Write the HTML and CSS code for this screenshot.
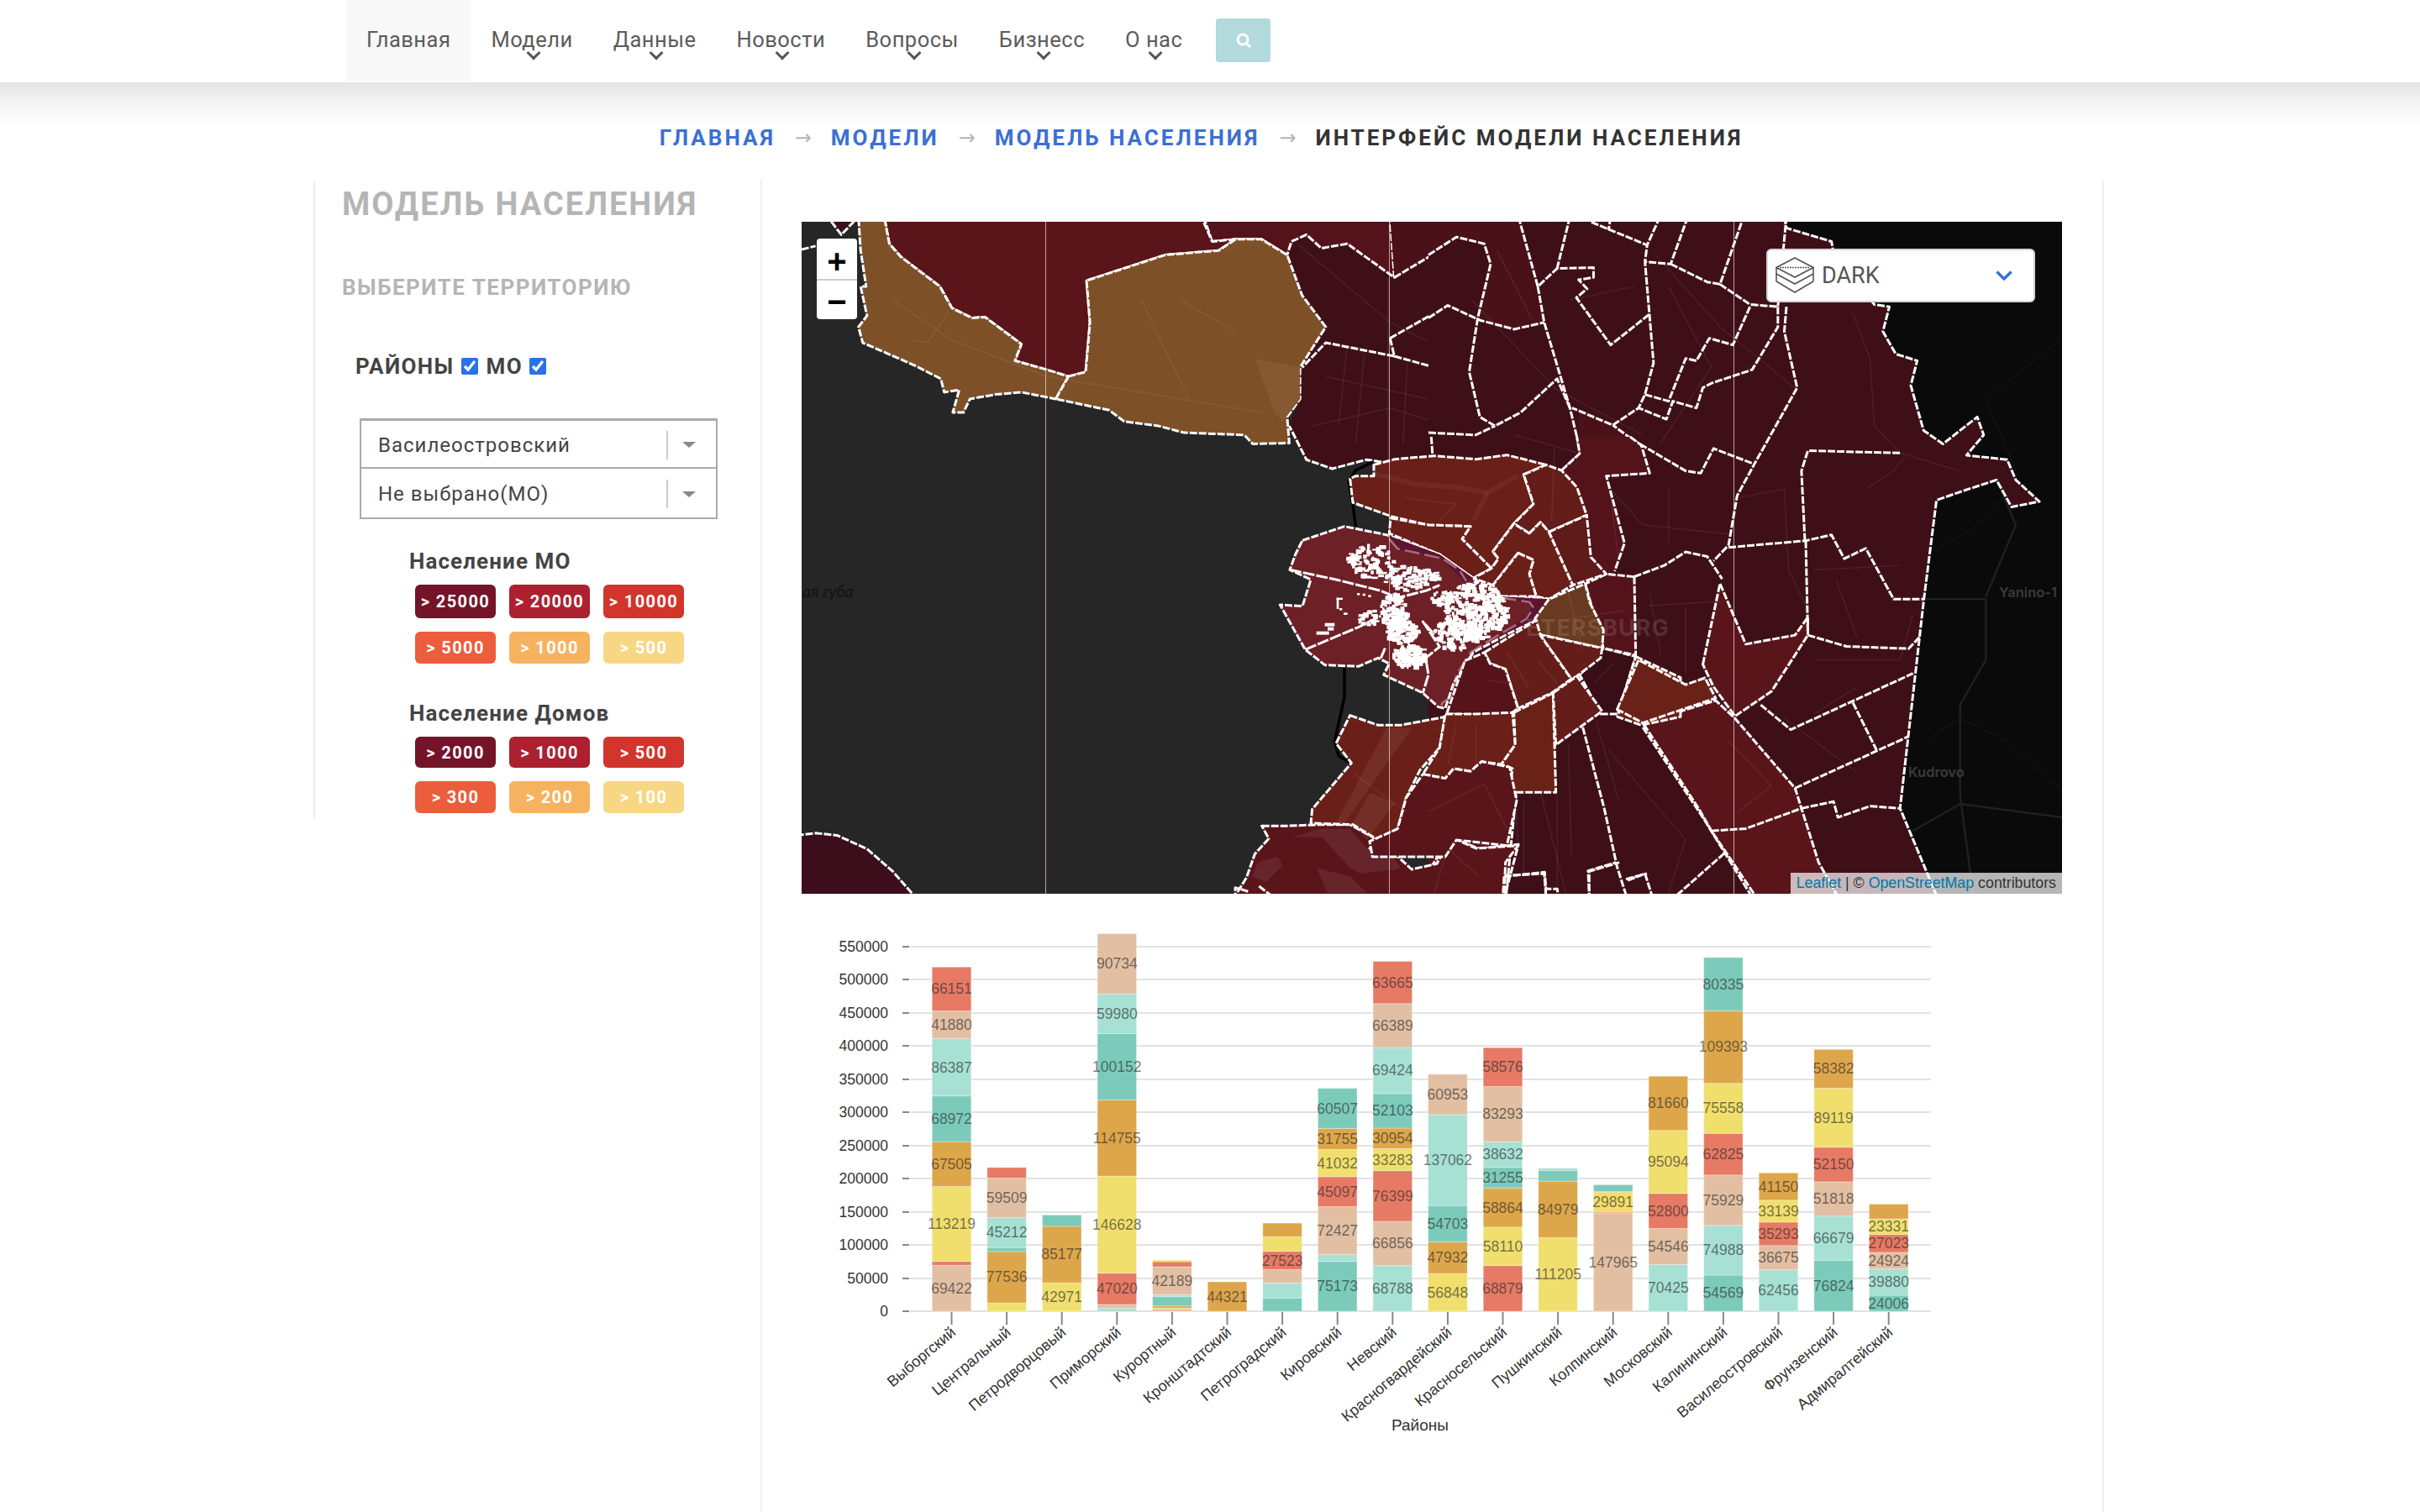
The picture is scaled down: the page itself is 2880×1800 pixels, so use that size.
FILE: index.html
```html
<!DOCTYPE html>
<html lang="ru">
<head>
<meta charset="utf-8">
<title>Модель населения</title>
<link rel="stylesheet" href="styles.css">
</head>
<body>
<header class="topbar">
  <nav class="nav">
    <a class="nav-item active">Главная</a>
    <a class="nav-item drop">Модели</a>
    <a class="nav-item drop">Данные</a>
    <a class="nav-item drop">Новости</a>
    <a class="nav-item drop">Вопросы</a>
    <a class="nav-item drop">Бизнесс</a>
    <a class="nav-item drop">О нас</a>
    <button class="search" aria-label="Поиск">
      <svg width="20" height="20" viewBox="0 0 20 20"><circle cx="9" cy="9" r="6" fill="none" stroke="#fff" stroke-width="3"/><path d="M13 13l5 5" stroke="#fff" stroke-width="3"/></svg>
    </button>
  </nav>
</header>
<div class="topshade"></div>
<ol class="crumbs">
  <li><a>Главная</a></li><li class="arrow">→</li>
  <li><a>Модели</a></li><li class="arrow">→</li>
  <li><a>Модель населения</a></li><li class="arrow">→</li>
  <li class="current">Интерфейс модели населения</li>
</ol>
<main class="main">
  <aside class="side">
    <div class="panel">
      <h1 class="title">Модель населения</h1>
      <h2 class="subtitle">Выберите территорию</h2>
      <div class="checks">
        <label class="check">Районы <input type="checkbox" checked></label>
        <label class="check">МО <input type="checkbox" checked></label>
      </div>
      <div class="selects">
        <div class="select"><span class="select-text">Василеостровский</span><span class="select-sep"></span><span class="select-caret"></span></div>
        <div class="select"><span class="select-text">Не выбрано(МО)</span><span class="select-sep"></span><span class="select-caret"></span></div>
      </div>
      <h3 class="legend-title first">Население МО</h3>
      <div class="badges one">
        <span class="badge c1">&gt; 25000</span><span class="badge c2">&gt; 20000</span><span class="badge c3">&gt; 10000</span>
        <span class="badge c4">&gt; 5000</span><span class="badge c5">&gt; 1000</span><span class="badge c6">&gt; 500</span>
      </div>
      <h3 class="legend-title second">Население Домов</h3>
      <div class="badges two">
        <span class="badge c1">&gt; 2000</span><span class="badge c2">&gt; 1000</span><span class="badge c3">&gt; 500</span>
        <span class="badge c4">&gt; 300</span><span class="badge c5">&gt; 200</span><span class="badge c6">&gt; 100</span>
      </div>
    </div>
  </aside>
  <section class="content">
    <div class="map">
      <svg class="map-svg" viewBox="0 0 1500 800" width="1500" height="800">
        <rect class="water" width="1500" height="800"/>
        <rect class="eastland" x="950" width="550" height="800"/>
        <!-- east side roads -->
        <g transform="translate(746,-14) scale(.5102 .5356)">
          <polyline class="eroad" points="1160,865 1300,865 1300,1000 1240,1100 1240,1300 1270,1518"/>
          <polyline class="eroad" points="1130,1380 1240,1320 1478,1350"/>
          <polyline class="eroad" points="1325,600 1370,700 1300,860"/>
          <polyline class="eroad thin" points="1160,1180 1240,1130 1350,1180 1478,1290"/>
          <polyline class="eroad thin" points="1180,760 1280,700 1380,600 1300,420 1478,285"/>
        </g>
        <!-- left half of the city -->
        <g transform="translate(-14,-14) scale(.5102 .5356)">
          <polygon class="m3" points="960,15 1568,15 1568,560 1380,560 1345,555 1265,575 1205,555 1165,480 1190,420 1190,350 1250,260 1195,190 1160,100 1040,65 985,70"/>
          <polyline class="d" points="1380,560 1345,555 1265,575 1205,555 1165,480"/>
          <polygon class="r m2" points="965,15 1400,15 1410,150 1300,75 1240,85 1205,55 1170,70 1160,100 1100,65 1040,65 985,70"/>
          <polygon class="m2b" points="1400,15 1568,15 1568,60 1410,150"/>
          <polygon class="r m1" points="220,15 960,15 985,70 1040,65 1000,90 875,100 692,157 700,250 690,360 650,370 525,335 540,298 455,238 425,240 378,218 350,170 260,105 232,75"/>
          <polygon class="r or" points="160,15 220,15 232,75 260,105 350,170 378,218 425,240 455,238 540,298 525,335 600,355 650,370 620,420 540,405 480,410 420,420 405,450 380,450 395,400 360,405 352,375 290,345 170,295 160,260 180,235 165,170 178,170 165,90"/>
          <polygon class="r or" points="650,370 690,360 700,250 692,157 875,100 1000,90 1040,65 1100,65 1160,100 1195,190 1250,260 1190,350 1190,420 1160,460 1165,518 1080,520 1060,500 920,495 860,480 780,470 745,445 620,420"/>
          <polygon class="or2" points="1085,330 1190,350 1190,420 1150,470 1130,450"/>
          <polygon class="r m4" points="88,15 160,15 120,55"/>
          <polygon class="r m4" points="15,1390 60,1385 110,1390 180,1420 240,1470 300,1535 15,1535"/>
          <polyline class="d" points="27,88 60,80"/>
          <polyline class="d" points="1410,150 1568,60"/>
          <polyline class="d" points="1400,285 1535,212 1568,235"/>
          <polyline class="d" points="1400,285 1410,325 1250,295 1195,350"/>
          <polyline class="d" points="1410,325 1505,350 1495,490 1500,545"/>
          <polyline class="d" points="1500,495 1568,500"/>
          <polyline class="road" points="1190,80 1400,250 1568,330"/>
          <polyline class="road" points="1300,300 1280,480"/>
          <polyline class="road" points="1220,480 1400,440 1500,470"/>
          <polyline class="road" points="1395,150 1395,560"/>
          <polyline class="road" points="1250,370 1490,420"/>
          <polyline class="road" points="1340,320 1320,520"/>
          <polyline class="road" points="1440,340 1430,520"/>
          <polyline class="road" points="240,200 380,290 600,370 1100,450"/>
          <polyline class="road" points="820,200 930,420"/>
          <polyline class="road" points="910,200 1040,270"/>
          <polyline class="road" points="290,290 320,295 370,230"/>
        </g>
        <!-- right half of the city -->
        <g transform="translate(746,-14) scale(.5102 .5356)">
          <polygon class="m3" points="0,15 830,15 835,40 940,70 945,95 1040,210 1075,215 1060,270 1090,320 1140,335 1125,390 1155,490 1200,520 1280,460 1295,500 1255,545 1350,555 1370,600 1425,648 1360,660 1325,600 1245,625 1185,645 1155,870 1100,1330 1190,1535 0,1535"/>
          <polyline class="d" points="830,15 835,40 940,70 945,95 1040,210 1075,215 1060,270 1090,320 1140,335 1125,390 1155,490 1200,520 1280,460 1295,500 1255,545 1350,555 1370,600 1425,648 1360,660 1325,600 1245,625 1185,645 1155,870 1100,1330 1190,1535"/>
          <polygon class="m2b" points="0,15 210,15 270,250 200,265 115,240 145,120 130,75 65,60 0,100"/>
          <polygon class="m2b" points="350,450 440,480 510,580 410,590 455,740 415,800 375,740 350,620 310,580 350,540"/>
          <polygon class="r m1" points="640,1010 680,830 740,965 855,945 885,905 885,945 800,1070 715,1125 665,1060"/>
          <polygon class="r m1" points="500,1140 670,1090 715,1130 855,1285 870,1330 910,1450 960,1535 770,1535 660,1380 630,1330"/>
          <polygon class="m1" points="0,1240 190,1235 205,1290 180,1535 0,1535"/>
          <polyline class="d" points="0,1240 190,1235 205,1290 180,1535"/>
          <polyline class="road" points="990,230 1030,330 1040,480 1100,540 1240,580"/>
          <polyline class="road" points="1020,620 1085,580 1110,550"/>
          <polyline class="road" points="720,640 830,620 840,800 880,880"/>
          <polyline class="road" points="200,500 350,540 500,700 700,720"/>
          <polyline class="road" points="100,200 300,400 500,500"/>
          <polyline class="road" points="530,100 680,260 860,400"/>
          <polyline class="road" points="900,1000 1100,1000 1130,900"/>
          <polyline class="road" points="830,1130 1000,1250"/>
          <polyline class="road" points="250,1250 320,1518"/>
          <polyline class="road" points="420,1200 600,1400 560,1518"/>
          <polyline class="road" points="560,620 560,740"/>
          <polyline class="road" points="900,800 1100,790"/>
          <polyline class="road" points="950,820 1000,950"/>
          <polyline class="road" points="600,880 600,1030"/>
          <polyline class="road" points="510,880 680,870"/>
          <polyline class="road" points="900,1120 1000,1060"/>
          <polyline class="road" points="700,1180 800,1280 720,1340"/>
          <polyline class="road" points="20,560 60,720 0,850"/>
          <polyline class="road" points="160,90 240,240"/>
          <polyline class="road" points="330,200 480,170"/>
          <polyline class="road" points="560,170 660,350 540,520"/>
          <polyline class="d" points="210,15 255,170 300,130 385,128 385,150 350,155 370,175 345,195 425,300 515,232"/>
          <polyline class="d" points="255,170 270,250 330,440 355,540 310,580"/>
          <polyline class="d" points="0,100 65,60 130,75 145,120 115,240 95,360 120,460 155,480 215,450 300,375 330,440"/>
          <polyline class="d" points="0,240 45,212 120,245 200,265 270,250"/>
          <polyline class="d" points="0,495 110,500 155,480"/>
          <polyline class="d" points="330,15 300,130"/>
          <polyline class="d" points="380,27 510,78 505,115 525,340 505,410 490,440 430,478 335,440"/>
          <polyline class="d" points="425,15 420,45"/>
          <polyline class="d" points="540,15 510,78"/>
          <polyline class="d" points="605,15 565,120 505,115"/>
          <polyline class="d" points="565,120 650,160 680,165 735,15"/>
          <polyline class="d" points="680,165 750,210 815,215 835,15"/>
          <polyline class="d" points="815,215 815,260 755,355 660,385 640,395 625,440 570,425 555,465 490,440"/>
          <polyline class="d" points="505,410 560,425 600,330 625,335 655,285 710,300 750,215"/>
          <polyline class="d" points="835,215 830,270 860,395 760,565 720,635 700,745 665,780"/>
          <polyline class="d" points="700,750 880,735 940,722 970,775 1020,752 1085,865 1155,865"/>
          <polyline class="d" points="878,735 870,580 885,535 1100,540"/>
          <polyline class="d" points="880,735 885,945"/>
          <polyline class="d" points="885,945 975,970 1120,975 1145,950"/>
          <polyline class="d" points="475,510 600,580 635,585 665,530 760,565"/>
          <polyline class="d" points="410,590 505,575 475,510 430,478"/>
          <polyline class="d" points="480,815 550,790 600,760 650,770 685,820"/>
          <polyline class="d" points="775,1100 845,1155 1130,1030"/>
          <polyline class="d" points="990,1095 1045,1200"/>
          <polyline class="d" points="855,1285 1120,1170"/>
          <polyline class="d" points="870,1330 945,1315 955,1350 1030,1325 1100,1330"/>
          <polyline class="d" points="660,1380 740,1375 870,1330"/>
          <polyline class="d" points="690,1430 565,1535"/>
          <polyline class="d" points="500,1150 640,1350 760,1535"/>
          <polyline class="d" points="360,1150 410,1330 440,1460 465,1535"/>
          <polyline class="d" points="175,1535 210,1410 120,1420 50,1395 0,1470"/>
          <polyline class="d" points="175,1480 270,1475 275,1535"/>
          <polyline class="d" points="375,1535 375,1470 445,1450"/>
          <polyline class="d" points="465,1490 505,1475 525,1535"/>
        </g>
        <!-- south-west of the city -->
        <g transform="translate(486,516) scale(.3333)">
          <polygon class="r m1" points="185,610 265,610 395,605 500,605 600,660 570,690 650,700 720,765 810,745 860,650 950,690 1100,680 1055,740 1050,875 80,875 130,795 160,710 210,655"/>
          <polygon class="lt" points="290,650 395,620 500,620 560,690 640,700 680,760 660,765 540,780 500,760 400,650"/>
          <polygon class="lt" points="170,740 240,720 260,750 200,810 150,790"/>
          <polygon class="lt" points="380,760 500,790 560,850 420,850"/>
          <polyline class="d" points="1050,790 1195,775 1200,835 1240,835 1245,875"/>
          <polyline class="d" points="1050,790 1045,875"/>
          <polyline class="d" points="1355,875 1350,770 1450,740"/>
          <polyline class="d" points="1485,800 1560,780"/>
          <polyline class="d" points="90,875 90,830 140,845"/>
          <polyline class="d" points="175,825 240,875"/>
          <polyline class="road" points="520,400 700,500 800,600 1000,690"/>
          <polyline class="road" points="1090,500 1100,680"/>
          <polyline class="road" points="930,440 930,520 860,650 800,852"/>
          <polyline class="road" points="1240,500 1240,852"/>
          <polyline class="road" points="760,500 880,550 1060,500"/>
          <polyline class="road" points="850,690 960,790"/>
          <polyline class="road" points="1120,520 1120,780"/>
        </g>
        <!-- central districts -->
        <g transform="translate(546,256) scale(.3333)">
          <polyline class="coast" points="400,90 340,120 315,160 330,240 340,320"/>
          <polyline class="coast" points="300,825 300,930 265,1090 280,1140 330,1170"/>
          <polygon class="r dk" points="1140,850 1225,755 1340,785 1275,990 1215,990"/>
          <polygon class="b1" points="1075,120 1140,60 1130,0 1320,0 1360,30 1390,130 1235,140 1300,380 1265,480 1235,490 1180,430 1165,280 1130,180"/>
          <polyline class="d" points="1075,120 1140,60 1130,0"/>
          <polyline class="d" points="1320,0 1360,30 1390,130 1235,140 1300,380 1265,480"/>
          <polygon class="r b1" points="1335,500 1340,780 1225,755 1160,525 1235,490"/>
          <polygon class="r b2" points="405,100 480,80 620,68 770,80 880,65 1020,100 940,135 975,240 905,310 830,410 850,435 825,470 720,365 750,320 600,315 470,285 400,260 330,235 320,150 340,140 405,140"/>
          <polygon class="r b2" points="465,290 600,315 750,320 720,365 825,470 760,505 640,420 460,345"/>
          <polygon class="r b3" points="940,135 1020,100 1075,120 1130,180 1165,280 1030,340 1000,305 960,345 905,310 975,240"/>
          <polygon class="r b4" points="1030,340 1165,280 1180,430 1235,490 1115,530"/>
          <polygon class="r b2" points="960,345 1000,305 1030,340 1115,530 1030,580 985,570 960,490 975,440 920,415 830,530 760,505 825,470 850,435 830,410 905,310"/>
          <polygon class="r b2" points="920,415 975,440 960,490 985,570 860,570 830,530"/>
          <polygon class="r isl" points="150,370 300,320 450,350 640,420 760,505 860,570 1030,580 985,650 760,770 690,880 660,970 635,965 580,915 440,850 460,810 420,790 350,820 230,815 160,760 70,600 150,605 180,510 105,475 125,420"/>
          <polygon class="chan" points="455,352 640,420 760,505 730,520 640,430 500,405"/>
          <polygon class="chan" points="860,570 1030,580 985,650 830,725 950,640 975,600"/>
          <polygon class="r o1" points="1160,525 1175,590 1225,690 1220,755 990,705 980,650 1030,580"/>
          <polygon class="r b3" points="990,705 1220,755 1215,790 1130,855 1110,865 1000,710"/>
          <polygon class="r b3" points="800,770 985,655 1000,710 1110,865 1040,915 920,970 875,830 820,810"/>
          <polygon class="r b5" points="730,800 800,770 820,810 875,830 920,970 885,995 665,990 720,830"/>
          <polygon class="r b6" points="1340,785 1500,860 1500,1000 1360,1030 1275,1000"/>
          <polygon class="r b2" points="320,995 420,1030 500,1030 635,1005 660,1000 640,1110 570,1190 520,1290 490,1400 420,1440 330,1385 180,1380 185,1330 325,1165 270,1095"/>
          <polygon class="r b2" points="660,990 770,990 900,985 910,1100 860,1170 790,1160 750,1195 690,1185 660,1220 580,1205 640,1110"/>
          <polygon class="r b6" points="905,985 1045,915 1055,1270 890,1270 900,1185 860,1170 910,1100"/>
          <polygon class="r b3" points="1045,915 1130,855 1220,980 1055,1100"/>
          <polygon class="r m1" points="580,1205 660,1220 690,1185 750,1195 790,1160 890,1180 915,1300 880,1460 700,1440 660,1500 400,1500 390,1445 490,1400 520,1290"/>
          <polygon class="lt" points="450,1040 540,1040 300,1380 270,1380"/>
          <polygon class="lt" points="390,1270 480,1310 380,1440 330,1380"/>
          <polyline class="river" points="400,130 560,170 700,180 810,200 920,140"/>
          <polyline class="river" points="810,200 760,300"/>
          <polyline class="road" points="1100,560 1150,760"/>
          <polyline class="road" points="880,770 960,900"/>
          <polyline class="road" points="700,1020 670,1170"/>
          <polyline class="road" points="770,1030 770,1160"/>
          <polyline class="road" points="330,1200 520,1340"/>
          <polyline class="road" points="1100,1100 1110,1500"/>
          <polyline class="road" points="1250,200 1280,450"/>
          <polyline class="road" points="1200,1020 1280,1300"/>
          <polyline class="road" points="520,220 700,240 640,300"/>
          <polyline class="road" points="1050,40 1040,300"/>
          <polyline class="road" points="990,800 1060,880"/>
          <polyline class="road" points="1100,650 1300,620"/>
          <polyline class="road" points="600,1340 800,1240 880,1400"/>
          <polyline class="road" points="810,870 900,880"/>
          <polyline class="road" points="1390,560 1430,780"/>
          <polyline class="road" points="1260,810 1190,880"/>
          <polyline class="d strong" points="105,475 270,510 430,550 490,575 590,550 640,530"/>
          <polyline class="d strong" points="160,760 350,680 430,640"/>
          <polyline class="d strong" points="615,700 580,660 640,750 590,790 600,850 580,915"/>
          <polyline class="d strong" points="430,790 445,755"/>
          <polyline class="pink" points="460,365 490,400 560,415 650,435 710,475 735,515"/>
          <polyline class="pink" points="860,575 960,590 975,610 950,650 830,720 750,770 700,850 680,930 650,950 640,975"/>
          <polyline class="d" points="610,0 615,68"/>
          <g id="buildings" class="bld"></g>
        </g>
        <g transform="translate(746,-14) scale(.5102 .5356)">
          <polygon class="r b6" points="440,1110 490,1000 600,1055 645,1040 670,1085 500,1140"/>
        </g>
        <g class="seams">
          <line x1="290.5" x2="290.5" y1="0" y2="800"/>
          <line x1="699.5" x2="699.5" y1="0" y2="800"/>
          <line x1="1109.5" x2="1109.5" y1="0" y2="800"/>
        </g>
        <text class="place" x="1" y="447">ая губа</text>
        <text class="place city" x="862" y="493">ETERSBURG</text>
        <text class="place town" x="1425" y="447">Yanino-1</text>
        <text class="place town" x="1317" y="661">Kudrovo</text>
      </svg>
      <div class="zoom-ctl"><a class="zoom-btn">+</a><a class="zoom-btn">−</a></div>
      <div class="layers">
        <svg class="layers-icon" width="46" height="44" viewBox="0 0 46 44">
          <path d="M23 1L45 12.500 23 24 1 12.500z" fill="none" stroke="#555" stroke-width="1.600"/>
          <path d="M5 12.500h36" stroke="#555" stroke-width="1.600" stroke-dasharray="2 1"/>
          <path d="M1 20l22 12 22-12M1 29l22 13 22-13M1 12.500v7.500M45 12.500v7.500M1 20v9M45 20v9" fill="none" stroke="#555" stroke-width="1.600"/>
        </svg>
        <span class="layers-text">DARK</span>
        <svg class="layers-chev" width="20" height="12" viewBox="0 0 20 12"><path d="M1.500 1.500L10 10l8.500-8.500" fill="none" stroke="#3b70d9" stroke-width="3.400"/></svg>
      </div>
      <div class="attrib"><a>Leaflet</a> | © <a>OpenStreetMap</a> contributors</div>
    </div>
    <svg id="chart" class="chart" width="1500" height="736" viewBox="0 0 1500 736"></svg>
  </section>
</main>
<script src="chart.js"></script>
</body>
</html>
```
FILE: styles.css
```css
* { box-sizing: border-box; }
html, body { margin: 0; height: 100%; overflow: hidden; background: #fff; }
body { display: flex; flex-direction: column; font-family: Roboto, "Noto Sans", sans-serif; color: #444; }

.topbar { height: 98px; background: #fff; flex: none; }
.topshade { height: 52px; flex: none; background: linear-gradient(#e3e3e3, #f4f4f4 45%, #fff); }
.nav { display: flex; align-items: flex-start; padding-left: 412px; }
.nav-item { position: relative; height: 96px; padding: 0 24px; line-height: 94px; font-size: 25.500px; letter-spacing: .5px; color: #5b5b5b; }
.nav-item.active { background: #f8f8f8; }
.nav-item.drop::after { content: ""; position: absolute; left: 50%; top: 57px; width: 9px; height: 9px; margin-left: -4px; border-right: 3px solid #555; border-bottom: 3px solid #555; transform: rotate(45deg); }
.search { display: flex; align-items: center; justify-content: center; width: 65px; height: 52px; margin: 22px 0 0 16px; padding: 0; border: 0; border-radius: 4px; background: #b2d9dc; }

.crumbs { display: flex; justify-content: center; flex: none; margin: 0 0 0 -21px; padding: 0; height: 65px; list-style: none; font-size: 26px; font-weight: 700; line-height: 28px; letter-spacing: 3px; text-transform: uppercase; }
.crumbs li { white-space: nowrap; }
.crumbs a { color: #3a6fd6; }
.crumbs .arrow { width: 66px; text-align: center; font-family: "DejaVu Sans", sans-serif; font-size: 24px; color: #b5b5b5; font-weight: 400; letter-spacing: 0; }
.crumbs .current { color: #333; }

.main { flex: 1; display: flex; padding-left: 373px; min-height: 0; }
.side { width: 532px; flex: none; }
.panel { height: 760px; border-left: 2px solid #eee; padding: 8px 0 0 32px; }
.title { margin: 0; font-size: 38px; line-height: 40px; font-weight: 700; color: #b5b5b5; letter-spacing: 2px; text-transform: uppercase; white-space: nowrap; }
.subtitle { margin: 64px 0 0; font-size: 26px; line-height: 30px; font-weight: 700; color: #b5b5b5; letter-spacing: 1.500px; text-transform: uppercase; }
.checks { display: flex; align-items: center; gap: 10px; margin: 64px 0 0 16px; }
.check { display: flex; align-items: center; gap: 8px; font-size: 26px; line-height: 30px; font-weight: 700; color: #444; text-transform: uppercase; letter-spacing: 1.400px; }
.check input { width: 20px; height: 20px; margin: 0; accent-color: #2a72e8; }

.selects { width: 426px; margin: 47px 0 0 21px; }
.select { display: flex; align-items: center; height: 60px; border: 2px solid #aaa; border-top-width: 3px; padding: 2px 0 0 20px; }
.select + .select { height: 60px; border-top: 0; }
.select-text { flex: 1; font-size: 24px; letter-spacing: 1px; color: #444; }
.select-sep { width: 2px; height: 34px; background: #ccc; }
.select-caret { width: 0; height: 0; margin: 0 24px 0 17px; border-left: 8px solid transparent; border-right: 8px solid transparent; border-top: 7px solid #888; }

.legend-title { margin: 0 0 0 80px; font-size: 26px; line-height: 30px; font-weight: 700; color: #444; letter-spacing: 1.100px; }
.legend-title.first { margin-top: 35px; }
.legend-title.second { margin-top: 44px; }
.badges { display: grid; grid-template-columns: repeat(3, 96px); column-gap: 16px; row-gap: 16px; margin: 13px 0 0 87px; }
.badges.one { grid-template-rows: 40px 38px; }
.badges.two { grid-template-rows: 37px 38px; }
.badge { display: flex; align-items: center; justify-content: center; border-radius: 6px; color: #fff; font-size: 20px; font-weight: 700; letter-spacing: 1.400px; white-space: nowrap; }
.c1 { background: #741428; }
.c2 { background: #ad202f; }
.c3 { background: #d1352b; }
.c4 { background: #ec5d3b; }
.c5 { background: #f5b35f; }
.c6 { background: #f8d784; }

.content { flex: none; width: 1599px; border-left: 2px solid #eee; border-right: 2px solid #eee; padding: 49px 46px 0 47px; }
.map { position: relative; width: 1500px; height: 800px; overflow: hidden; }
.map-svg { display: block; }
.chart { display: block; }

.water { fill: #262626; }
.eastland { fill: #0a0a0a; }
.r, .d { stroke: #fff; stroke-width: 3; stroke-dasharray: 9 2; stroke-linejoin: round; vector-effect: non-scaling-stroke; }
.d { fill: none; }
.d.strong { stroke-dasharray: 14 2; }
.m1 { fill: #5a151b; }
.m2 { fill: #54131b; }
.m2b { fill: #4a1119; }
.m3 { fill: #3f0f18; }
.m4 { fill: #3c0d1b; }
.or { fill: #7d5028; }
.or2 { fill: #855a33; }
.lt { fill: rgba(255,255,255,.07); }
.b1 { fill: #54131a; }
.b2 { fill: #6a1f18; }
.b3 { fill: #651d19; }
.b4 { fill: #5f1a1a; }
.b5 { fill: #56131a; }
.b6 { fill: #6a2117; }
.dk { fill: #3a0e16; }
.isl { fill: #6d2026; }
.o1 { fill: #693a20; }
.chan { fill: #5c1530; }
.coast { fill: none; stroke: #000; stroke-width: 3.500; vector-effect: non-scaling-stroke; }
.road { fill: none; stroke: rgba(255,255,255,.07); stroke-width: 1.500; vector-effect: non-scaling-stroke; }
.river { fill: none; stroke: rgba(255,255,255,.05); stroke-width: 6; vector-effect: non-scaling-stroke; }
.eroad { fill: none; stroke: #202020; stroke-width: 2.500; vector-effect: non-scaling-stroke; }
.eroad.thin { stroke: #181818; stroke-width: 1; }
.pink { fill: none; stroke: rgba(240,190,205,.5); stroke-width: 2.500; stroke-dasharray: 18 6; vector-effect: non-scaling-stroke; }
.bld { fill: #fff; }
.seams line { stroke: rgba(255,235,235,.65); stroke-width: 1; }
.place { font-family: Lato, "Noto Sans", sans-serif; font-size: 19px; fill: #111; font-style: italic; }
.place.town { font-family: Inter, sans-serif; font-style: normal; font-weight: 600; fill: #3a3a3a; font-size: 16.500px; }
.place.city { font-family: Inter, sans-serif; font-style: normal; font-weight: 700; fill: rgba(255,255,255,.12); font-size: 27px; letter-spacing: 1px; }

.zoom-ctl { position: absolute; left: 18px; top: 20px; width: 48px; border-radius: 4px; background: #fff; }
.zoom-btn { display: block; height: 48px; padding-top: 13px; text-align: center; font: bold 40px/35px "Liberation Mono", monospace; color: #000; }
.zoom-btn + .zoom-btn { border-top: 2px solid #ccc; padding-top: 11px; }
.layers { position: absolute; left: 1148px; top: 32px; width: 320px; height: 64px; display: flex; align-items: center; padding: 0 25px 0 9px; background: #fff; border: 2px solid #d4d4d4; border-radius: 6px; }
.layers-text { flex: 1; margin-left: 9px; font-size: 27px; color: #555; }
.attrib { position: absolute; right: 0; bottom: 0; height: 25px; padding: 0 7px; background: rgba(255,255,255,.7); font: 17.800px/25px "Liberation Sans", sans-serif; color: #333; white-space: nowrap; }
.attrib a { color: #0078a8; }

.grid { stroke: #e2e2e2; stroke-width: 2; }
.tick { stroke: #888; stroke-width: 2; }
.axis-text { font: 17.500px "Liberation Sans", sans-serif; fill: #333; }
.cat-text { font: 18.200px "Liberation Sans", sans-serif; fill: #333; text-anchor: end; }
.name-text { font: 19px "Liberation Sans", sans-serif; fill: #333; text-anchor: middle; }
.val { font: 17.500px "Liberation Sans", sans-serif; fill: rgba(40,40,40,.62); text-anchor: middle; }
.seg { stroke: rgba(255,255,255,.3); stroke-width: 1; }
```
FILE: chart.js
```js
var NS = 'http://www.w3.org/2000/svg';
function el(parent, tag, attrs, text) {
  var n = document.createElementNS(NS, tag);
  for (var k in attrs) n.setAttribute(k, attrs[k]);
  if (text !== undefined) n.textContent = text;
  parent.appendChild(n);
  return n;
}
var C = { D: '#7ccbba', L: '#a7e1d4', P: '#e2bfa3', R: '#e67a65', Y: '#f0df6d', O: '#dea64b' };
var DATA = [
  ['Выборгский', 'P69422 R5700 Y113219 O67505 D68972 L86387 P41880 R66151'],
  ['Центральный', 'Y12600 O77536 D6000 L45212 P59509 R16000'],
  ['Петродворцовый', 'Y42971 O85177 D17000'],
  ['Приморский', 'L4600 P5700 R47020 Y146628 O114755 D100152 L59980 P90734'],
  ['Курортный', 'P1000 R1500 Y2500 O3000 D14000 L3000 P42189 R7500 Y2500'],
  ['Кронштадтский', 'O44321'],
  ['Петроградский', 'D20000 L22400 P20500 R27523 Y22000 O20500'],
  ['Кировский', 'D75173 L10300 P72427 R45097 Y41032 O31755 D60507'],
  ['Невский', 'L68788 P66856 R76399 Y33283 O30954 D52103 L69424 P66389 R63665'],
  ['Красногвардейский', 'Y56848 O47932 D54703 L137062 P60953'],
  ['Красносельский', 'R68879 Y58110 O58864 D31255 L38632 P83293 R58576'],
  ['Пушкинский', 'Y111205 O84979 D16000 L3500'],
  ['Колпинский', 'P147965 R1500 Y29891 O1500 D10000'],
  ['Московский', 'L70425 P54546 R52800 Y95094 O81660'],
  ['Калининский', 'D54569 L74988 P75929 R62825 Y75558 O109393 D80335'],
  ['Василеостровский', 'L62456 P36675 R35293 Y33139 O41150'],
  ['Фрунзенский', 'D76824 L66679 P51818 R52150 Y89119 O58382'],
  ['Адмиралтейский', 'D24006 L39880 P24924 R27023 Y23331 O22400']
];
var BASE = 497, K = 434 / 550000, X0 = 178.5, STEP = 65.6, BW = 46.5;
var svg = document.getElementById('chart');
var v;
for (v = 0; v <= 550000; v += 50000) {
  var gy = Math.round(BASE - v * K);
  el(svg, 'line', { 'class': 'grid', x1: 129, x2: 1344, y1: gy, y2: gy });
  el(svg, 'line', { 'class': 'tick', x1: 120, x2: 128, y1: gy, y2: gy });
  el(svg, 'text', { 'class': 'axis-text', x: 103, y: gy + 6, 'text-anchor': 'end' }, v);
}
DATA.forEach(function (d, i) {
  var cx = X0 + STEP * i, y = BASE;
  var labels = [];
  d[1].split(' ').forEach(function (s) {
    var val = +s.slice(1), h = val * K;
    y -= h;
    el(svg, 'rect', { 'class': 'seg', x: cx - BW / 2, y: y, width: BW, height: h, fill: C[s[0]] });
    if (val >= 23000) labels.push([val, y + h / 2 + 6]);
  });
  labels.forEach(function (l) {
    el(svg, 'text', { 'class': 'val', x: cx, y: l[1] }, l[0]);
  });
  el(svg, 'line', { 'class': 'tick', x1: cx, x2: cx, y1: BASE + 1, y2: BASE + 16 });
  var tx = cx + 6, ty = 524;
  el(svg, 'text', { 'class': 'cat-text', x: tx, y: ty, transform: 'rotate(-40 ' + tx + ' ' + ty + ')' }, d[0]);
});
el(svg, 'text', { 'class': 'name-text', x: 736, y: 639 }, 'Районы');

/* Buildings of Vasilyevsky island, scattered from a fixed seed */
var seed = 12345;
function rnd() { seed = (seed * 16807) % 2147483647; return seed / 2147483647; }
var CL = [
  [760, 620, 115, 105, 360], [700, 700, 90, 55, 110], [470, 620, 45, 65, 130], [500, 690, 55, 45, 120],
  [525, 780, 60, 40, 130], [390, 440, 85, 60, 90], [520, 500, 85, 45, 90], [640, 570, 35, 28, 30],
  [380, 640, 35, 30, 25], [590, 490, 45, 20, 25]
];
var g = document.getElementById('buildings');
CL.forEach(function (c) {
  for (var n = 0; n < c[4]; n++) {
    var a = rnd() * 6.283, r = Math.sqrt(rnd());
    var w = 7 + rnd() * 14, h = 6 + rnd() * 11;
    el(g, 'rect', { x: c[0] + Math.cos(a) * r * c[2], y: c[1] + Math.sin(a) * r * c[3], width: w, height: h });
  }
});
[[200, 695, 45, 12], [230, 665, 35, 12], [240, 680, 22, 12], [272, 575, 8, 40], [272, 575, 22, 7], [282, 612, 10, 8], [297, 628, 14, 8], [345, 558, 10, 8], [365, 560, 10, 8], [385, 565, 10, 8]].forEach(function (b) {
  el(g, 'rect', { x: b[0], y: b[1], width: b[2], height: b[3] });
});
```
